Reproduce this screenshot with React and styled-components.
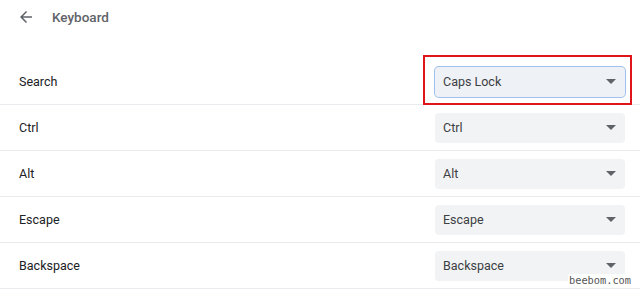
import styled, { createGlobalStyle } from "styled-components";

const GlobalStyle = createGlobalStyle`
  body {
    margin: 0;
    background: #ffffff;
    font-family: Roboto, "Liberation Sans", Arial, sans-serif;
  }
`;

const Page = styled.div`
  position: relative;
  width: 640px;
  height: 295px;
  overflow: hidden;
  background: #fff;
`;

const Header = styled.div`
  display: flex;
  align-items: center;
  height: 34px;
  padding-left: 17px;
  gap: 17px;
  margin-bottom: 25px;
`;

const BackButton = styled.div`
  display: flex;
  align-items: center;
  justify-content: center;
  width: 18px;
  height: 18px;
  color: #5f6368;
`;

const Title = styled.div`
  font-size: 13.5px;
  font-weight: 500;
  color: #5f6368;
`;

const Row = styled.div`
  display: flex;
  align-items: center;
  justify-content: space-between;
  height: 46px;
  padding: 0 15px 0 19px;
  border-bottom: 1px solid #e8eaed;
  box-sizing: border-box;
`;

const Label = styled.div`
  font-size: 12.5px;
  color: #202124;
`;

const SelectWrap = styled.div`
  position: relative;
`;

const Select = styled.div`
  display: flex;
  align-items: center;
  justify-content: space-between;
  width: 190px;
  height: 30px;
  box-sizing: border-box;
  padding: 0 9px 0 8px;
  border-radius: 4px;
  background: ${(p) => (p.$focused ? "#eef1f6" : "#f1f3f4")};
  box-shadow: ${(p) => (p.$focused ? "0 0 0 1px #9fc0f0" : "none")};
  font-size: 12.5px;
  color: #3c4043;
`;

const Caret = styled.span`
  width: 0;
  height: 0;
  border-left: 5px solid transparent;
  border-right: 5px solid transparent;
  border-top: 5px solid #5f6368;
`;

const Highlight = styled.div`
  position: absolute;
  left: -12px;
  right: -7px;
  top: -12px;
  bottom: -8px;
  border: 2px solid #e0141b;
  pointer-events: none;
`;

const Watermark = styled.div`
  position: absolute;
  right: 8px;
  bottom: 9px;
  font-family: "DejaVu Sans Mono", "Liberation Mono", monospace;
  font-size: 10.3px;
  color: #555;
  background: rgba(255, 255, 255, 0.85);
  padding: 0 1px;
`;

const rows = [
  { label: "Search", value: "Caps Lock", focused: true },
  { label: "Ctrl", value: "Ctrl" },
  { label: "Alt", value: "Alt" },
  { label: "Escape", value: "Escape" },
  { label: "Backspace", value: "Backspace" },
];

export default function App() {
  return (
    <Page>
      <GlobalStyle />
      <Header>
        <BackButton>
          <svg width="18" height="18" viewBox="0 0 24 24" fill="currentColor">
            <path d="M20 11H7.83l5.59-5.59L12 4l-8 8 8 8 1.41-1.41L7.83 13H20v-2z" />
          </svg>
        </BackButton>
        <Title>Keyboard</Title>
      </Header>
      {rows.map((r) => (
        <Row key={r.label}>
          <Label>{r.label}</Label>
          <SelectWrap>
            <Select $focused={r.focused}>
              {r.value}
              <Caret />
            </Select>
            {r.focused && <Highlight />}
          </SelectWrap>
        </Row>
      ))}
      <Watermark>beebom.com</Watermark>
    </Page>
  );
}
